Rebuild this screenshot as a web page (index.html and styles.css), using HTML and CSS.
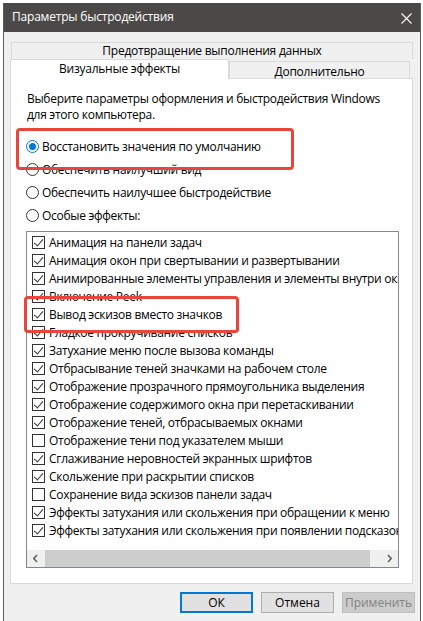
FILE: index.html
```html
<!DOCTYPE html>
<html lang="ru">
<head>
  <meta charset="UTF-8" />
  <title>Параметры быстродействия</title>
  <link rel="stylesheet" href="styles.css">
</head>
<body>
  <div class="window">
    <div class="titlebar">
      <span class="title">Параметры быстродействия</span>
      <svg class="close" width="11" height="11" viewBox="0 0 11 11">
        <path d="M0.5 0.5 L10.5 10.5 M10.5 0.5 L0.5 10.5" stroke="#fff" stroke-width="1.1" fill="none"/>
      </svg>
    </div>

    <div class="client">
      <div class="tabs">
        <div class="tab-row back">
          <div class="tab tab-wide">Предотвращение выполнения данных</div>
        </div>
        <div class="tab-row front">
          <div class="tab tab-active">Визуальные эффекты</div>
          <div class="tab tab-side">Дополнительно</div>
        </div>
      </div>

      <div class="panel">
        <p class="intro">Выберите параметры оформления и быстродействия Windows<br>для этого компьютера.</p>

        <div class="radios">
          <label class="radio-row"><span class="radio checked"></span>Восстановить значения по умолчанию</label>
          <label class="radio-row"><span class="radio"></span>Обеспечить наилучший вид</label>
          <label class="radio-row"><span class="radio"></span>Обеспечить наилучшее быстродействие</label>
          <label class="radio-row"><span class="radio"></span>Особые эффекты:</label>
        </div>

        <div class="listbox">
          <ul class="items">
            <li class="item"><span class="check on"></span>Анимация на панели задач</li>
            <li class="item"><span class="check on"></span>Анимация окон при свертывании и развертывании</li>
            <li class="item"><span class="check on"></span>Анимированные элементы управления и элементы внутри окна</li>
            <li class="item"><span class="check on"></span>Включение Peek</li>
            <li class="item"><span class="check on"></span>Вывод эскизов вместо значков</li>
            <li class="item"><span class="check on"></span>Гладкое прокручивание списков</li>
            <li class="item"><span class="check on"></span>Затухание меню после вызова команды</li>
            <li class="item"><span class="check on"></span>Отбрасывание теней значками на рабочем столе</li>
            <li class="item"><span class="check on"></span>Отображение прозрачного прямоугольника выделения</li>
            <li class="item"><span class="check on"></span>Отображение содержимого окна при перетаскивании</li>
            <li class="item"><span class="check on"></span>Отображение теней, отбрасываемых окнами</li>
            <li class="item"><span class="check"></span>Отображение тени под указателем мыши</li>
            <li class="item"><span class="check on"></span>Сглаживание неровностей экранных шрифтов</li>
            <li class="item"><span class="check on"></span>Скольжение при раскрытии списков</li>
            <li class="item"><span class="check"></span>Сохранение вида эскизов панели задач</li>
            <li class="item"><span class="check on"></span>Эффекты затухания или скольжения при обращении к меню</li>
            <li class="item"><span class="check on"></span>Эффекты затухания или скольжения при появлении подсказок</li>
          </ul>
          <div class="hscroll">
            <span class="arrow">
              <svg width="7" height="9" viewBox="0 0 7 9"><path d="M5 1 L1.8 4.5 L5 8" stroke="#606060" stroke-width="1.6" fill="none"/></svg>
            </span>
            <span class="thumb"></span>
            <span class="arrow arrow-right">
              <svg width="7" height="9" viewBox="0 0 7 9"><path d="M2 1 L5.2 4.5 L2 8" stroke="#606060" stroke-width="1.6" fill="none"/></svg>
            </span>
          </div>
        </div>

        <!-- красные рамки поверх содержимого -->
        <div class="mark mark-radio"></div>
        <div class="mark mark-item"></div>
      </div>

      <div class="buttons">
        <button class="btn btn-default">ОК</button>
        <button class="btn">Отмена</button>
        <button class="btn btn-disabled">Применить</button>
      </div>
    </div>
  </div>
</body>
</html>
```

FILE: styles.css
```css
/* --- базовые настройки --- */
:root {
  --title-bg: #4a4947; --face: #f0f0f0; --tab-line: #d9d9d9;
  --accent: #0078d7; --mark: #e8453c; --text: #000000;
}
* { box-sizing: border-box; }
body {
  margin: 0; background: #ffffff; overflow: hidden;
  font-family: "Open Sans", "Liberation Sans", sans-serif;
  font-size: 12px; color: var(--text);
}

/* --- окно --- */
.window {
  margin: 3px 0 0 3px; width: 418px; height: 618px;
  background: var(--face);
  border-left: 1px solid #5b5b5b; border-right: 1px solid #5b5b5b;
}
.titlebar {
  height: 29px; background: var(--title-bg); color: #fff;
  display: flex; align-items: center; justify-content: space-between;
  padding: 0 8px 2px 8px;
}
.title { font-size: 12px; letter-spacing: -0.2px; }
.close { margin-top: 3px; margin-right: 0; }

.client { padding: 10px 6px 0 6px; }

/* --- вкладки --- */
.tab-row { display: flex; }
.tab {
  border: 1px solid var(--tab-line); border-bottom: none;
  background: var(--face); text-align: center;
  font-size: 12px; letter-spacing: -0.25px; white-space: nowrap;
}
.back { padding-left: 1px; }
.tab-wide { width: 402px; height: 17px; line-height: 15px; }
.front { align-items: flex-end; position: relative; z-index: 1; margin-bottom: -1px; }
.tab-active { width: 219px; height: 20px; line-height: 17px; background: #fff; }
.tab-side { width: 181px; height: 18px; line-height: 19px; border-bottom: 1px solid var(--tab-line); }

/* --- панель --- */
.panel {
  position: relative; width: 403px; height: 506px;
  background: #fff; border: 1px solid var(--tab-line);
  padding: 12px 0 0 16px;
}
.intro { margin: 0; line-height: 16px; letter-spacing: -0.3px; }

.radios { margin-top: 12px; margin-left: -1px; }
.radio-row { display: flex; align-items: center; height: 23px; letter-spacing: -0.3px; }
.radio {
  width: 13px; height: 13px; border-radius: 50%;
  border: 1px solid #333; background: #fff; margin-right: 3px;
  display: grid; place-items: center;
}
.radio.checked { border-color: var(--accent); }
.radio.checked::after {
  content: ''; width: 7px; height: 7px; border-radius: 50%; background: var(--accent);
}

/* --- список с флажками --- */
.listbox {
  margin: 4px 0 0 -1px; width: 373px; height: 337px;
  border: 1px solid #828790; display: flex; flex-direction: column;
}
.items { list-style: none; margin: 0; padding: 1px 0 0 5px; flex: 1; overflow: hidden; }
.item {
  display: flex; align-items: center; height: 18px;
  white-space: nowrap; letter-spacing: -0.3px;
}
.check {
  flex: none; width: 13px; height: 13px; border: 1px solid #333;
  background: #fff; margin-right: 4px; position: relative;
}
.check.on::after {
  content: ''; position: absolute; left: 3px; top: 0px;
  width: 4px; height: 8px;
  border-right: 1px solid #333; border-bottom: 1px solid #333;
  transform: rotate(40deg);
}
.hscroll { height: 17px; background: var(--face); display: flex; align-items: center; }
.arrow { width: 17px; height: 17px; display: grid; place-items: center; }
.thumb { width: 325px; height: 17px; margin-left: 1px; background: #cdcdcd; }
.arrow-right { margin-left: auto; }

/* --- красные выделения --- */
.mark { position: absolute; border: 3px solid var(--mark); border-radius: 4px; }
.mark-radio { left: 5px; top: 49px; width: 278px; height: 42px; }
.mark-item { left: 13px; top: 217px; width: 215px; height: 37px; }

/* --- кнопки --- */
.buttons { display: flex; justify-content: flex-end; gap: 8px; margin: 8px -1px 0 0; }
.btn {
  width: 73px; height: 21px; padding: 0;
  font-family: inherit; font-size: 12px;
  background: #e1e1e1; border: 1px solid #adadad; color: #000;
}
.btn-default { border: 2px solid var(--accent); }
.btn-disabled { background: #cccccc; border-color: #bfbfbf; color: #838383; }
```
